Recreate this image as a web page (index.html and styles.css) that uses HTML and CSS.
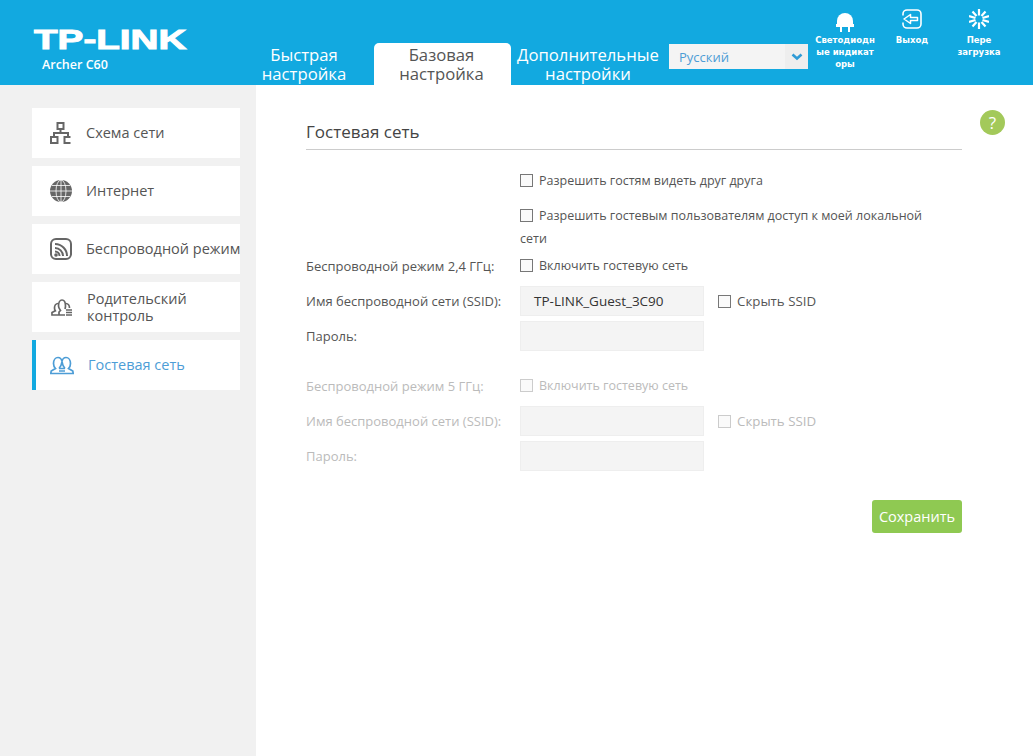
FILE: index.html
```html
<!DOCTYPE html>
<html lang="ru">
<head>
    <meta charset="UTF-8">
    <title>TP-LINK Archer C60</title>
    <link rel="stylesheet" href="styles.css">
</head>
<body>
    <!-- Top bar -->
    <header class="topbar">
        <div class="brand">
            <div class="brand-logo">TP-LINK</div>
            <div class="brand-model">Archer C60</div>
        </div>
        <nav class="tabs">
            <div class="tab tab-quick">Быстрая настройка</div>
            <div class="tab tab-basic active">Базовая настройка</div>
            <div class="tab tab-advanced">Дополнительные настройки</div>
        </nav>
        <div class="lang-select">
            <span class="lang-value">Русский</span>
            <span class="lang-arrow">
                <svg width="12" height="8" viewBox="0 0 12 8"><path d="M1.500 1.500L6 5.500l4.500-4" fill="none" stroke="#2f9bd6" stroke-width="2.600"/></svg>
            </span>
        </div>
        <div class="top-actions">
            <div class="action action-led">
                <svg width="18" height="19" viewBox="0 0 18 19"><path d="M1 13V8a8 8 0 0 1 16 0v5z" fill="#fff"/><rect x="0" y="11" width="18" height="3" fill="#fff"/><rect x="4" y="14" width="2" height="5" fill="#fff"/><rect x="12" y="14" width="2" height="5" fill="#fff"/></svg>
                <span>Светодиодн ые индикат оры</span>
            </div>
            <div class="action action-exit">
                <svg width="20" height="20" viewBox="0 0 20 20" fill="none" stroke="#fff"><path d="M1 6.500V5a4 4 0 0 1 4-4h10a4 4 0 0 1 4 4v10a4 4 0 0 1-4 4H5a4 4 0 0 1-4-4v-1.500" stroke-width="1.600"/><path d="M2 10l6.500-4.500v3h7v3h-7v3z" stroke-width="1.500" stroke-linejoin="round"/></svg>
                <span>Выход</span>
            </div>
            <div class="action action-reboot">
                <svg width="20" height="20" viewBox="0 0 20 20" stroke="#fff" stroke-width="2.200"><path d="M10 0v6.500M10 13.500V20M0 7l6.500 2M13.500 11L20 13M0 13l6.500-2M13.500 9L20 7M3.500 2.500L7.500 7M12.500 13l4 4.500M3.500 17.500l4-4.500M12.500 7l4-4.500"/></svg>
                <span>Пере загрузка</span>
            </div>
        </div>
    </header>

    <div class="page">
        <!-- Left menu -->
        <aside class="sidebar">
            <div class="menu-item">
                <svg class="menu-icon" width="24" height="24" viewBox="0 0 24 24" fill="none" stroke="#666" stroke-width="2"><rect x="8.500" y="2" width="6" height="6"/><rect x="2" y="16" width="6.500" height="6"/><path d="M21.500 16h-6v6h6M11.500 8v4M5 16v-4h14v4"/></svg>
                <span>Схема сети</span>
            </div>
            <div class="menu-item">
                <svg class="menu-icon" width="24" height="24" viewBox="0 0 24 24"><circle cx="12" cy="12" r="11" fill="#666"/><g fill="none" stroke="#fff" stroke-width=".8"><ellipse cx="12" cy="12" rx="5" ry="11"/><path d="M12 1v22M1 12h22M3 6.500h18M3 17.500h18"/></g></svg>
                <span>Интернет</span>
            </div>
            <div class="menu-item">
                <svg class="menu-icon" width="24" height="24" viewBox="0 0 24 24" fill="none" stroke="#666"><rect x="2" y="2" width="20" height="20" rx="5" stroke-width="2"/><path d="M6 11a8 8 0 0 1 8 8M6 14.500a4.500 4.500 0 0 1 4.500 4.500M6 7a12 12 0 0 1 12 12" stroke-width="2"/><circle cx="7" cy="18" r="1.800" fill="#666" stroke="none"/></svg>
                <span>Беспроводной режим</span>
            </div>
            <div class="menu-item">
                <svg class="menu-icon icon-parent" width="22" height="18" viewBox="0 0 22 18" fill="none" stroke="#666" stroke-width="1.700"><path d="M7 5.500C5 5.500 3.500 7.500 3.500 10c0 1 .3 2 .8 2.800L1 14.500V17h13"/><path d="M8 17v-3l1.500-1.500C8.300 11 7.500 9.500 7.500 8c0-3.500 1.500-6 3.500-6s3.500 2.500 3.500 6c0 1-.2 2-.5 3"/><path d="M15 5.500c2 0 3.500 2 3.500 4.500"/><path d="M15 12h6M15 14.500h6M15 17h6" stroke-width="1.600"/></svg>
                <span>Родительский контроль</span>
            </div>
            <div class="menu-item active">
                <svg class="menu-icon" width="24" height="24" viewBox="0 0 24 24" fill="none" stroke="#4d9dd6" stroke-width="1.700"><path d="M9 20.500H.8l.4-2.500 4.300-2.500C4 14 3.500 12.500 3.500 10.500 3.500 7 5.500 4.500 8 4.500s3.500 1.500 4 4c.5-2.500 1.500-4 4-4s4.500 2.500 4.500 6c0 2-.5 3.500-2 5l4.300 2.500.4 2.500H15"/><path d="M9 15.500c1-1 2.500-3 3-7 .5 4 2 6 3 7"/><path d="M9 15.500h6M9 18h6M9 20.500h6"/></svg>
                <span>Гостевая сеть</span>
            </div>
        </aside>

        <!-- Content -->
        <main class="content">
            <div class="help">?</div>
            <h2 class="section-title">Гостевая сеть</h2>

            <div class="form">
                <div class="form-row row-top">
                    <label class="check"><i class="box"></i>Разрешить гостям видеть друг друга</label>
                </div>
                <div class="form-row row-wrap">
                    <label class="check"><i class="box"></i>Разрешить гостевым пользователям доступ к моей локальной сети</label>
                </div>
                <div class="form-row row-check">
                    <div class="label">Беспроводной режим 2,4 ГГц:</div>
                    <label class="check"><i class="box"></i>Включить гостевую сеть</label>
                </div>
                <div class="form-row row-ssid">
                    <div class="label">Имя беспроводной сети (SSID):</div>
                    <div class="input">TP-LINK_Guest_3C90</div>
                    <label class="check hide-ssid"><i class="box"></i>Скрыть SSID</label>
                </div>
                <div class="form-row row-pass">
                    <div class="label">Пароль:</div>
                    <div class="input"></div>
                </div>

                <div class="form-row row-check band-5 disabled">
                    <div class="label">Беспроводной режим 5 ГГц:</div>
                    <label class="check"><i class="box"></i>Включить гостевую сеть</label>
                </div>
                <div class="form-row row-ssid disabled">
                    <div class="label">Имя беспроводной сети (SSID):</div>
                    <div class="input"></div>
                    <label class="check hide-ssid"><i class="box"></i>Скрыть SSID</label>
                </div>
                <div class="form-row row-pass disabled">
                    <div class="label">Пароль:</div>
                    <div class="input"></div>
                </div>
            </div>

            <div class="actions">
                <button class="save">Сохранить</button>
            </div>
        </main>
    </div>
</body>
</html>
```

FILE: styles.css
```css
* {
    margin: 0;
    padding: 0;
    box-sizing: border-box;
}

body {
    font-family: 'Open Sans', 'DejaVu Sans', sans-serif;
    font-size: 13px;
    color: #555;
    background: #fff;
    overflow: hidden;
}

/* Top bar */
.topbar {
    height: 85px;
    background: #12a9e0;
    display: flex;
    align-items: flex-end;
    padding-left: 34px;
    color: #fff;
}

.brand {
    width: 202px;
    align-self: flex-start;
    padding-top: 25px;
}

.brand-logo {
    font-family: 'Liberation Sans', sans-serif;
    font-size: 28px;
    font-weight: bold;
    line-height: 30px;
    -webkit-text-stroke: 1px #fff;
    transform: scaleX(1.38);
    transform-origin: left center;
}

.brand-model {
    font-size: 12.500px;
    font-weight: 600;
    margin: 1px 0 0 8px;
}

.tabs {
    display: flex;
    height: 42px;
}

.tab {
    font-size: 16.700px;
    line-height: 19px;
    text-align: center;
    padding-top: 2px;
    color: #fff;
}

.tab-quick {
    width: 138px;
    padding-left: 22px;
    padding-right: 24px;
}

.tab-basic {
    width: 137px;
    padding-left: 20px;
    padding-right: 22px;
}

.tab-advanced {
    width: 158px;
    padding-right: 4px;
}

.tab.active {
    background: #fff;
    color: #555;
    border-radius: 5px 5px 0 0;
}

.lang-select {
    width: 139px;
    height: 25px;
    align-self: flex-start;
    margin: 44px 0 0 0;
    background: #f4f4f4;
    display: flex;
    align-items: center;
    justify-content: space-between;
    color: #4d9dd6;
    font-size: 13px;
    padding-left: 10px;
}

.lang-arrow {
    width: 23px;
    height: 100%;
    background: #eee;
    display: flex;
    align-items: center;
    justify-content: center;
}

.top-actions {
    display: flex;
    align-self: flex-start;
    padding-top: 9px;
}

.action {
    font-family: 'DejaVu Sans', sans-serif;
    font-size: 8.500px;
    font-weight: bold;
    line-height: 12px;
    text-align: center;
    display: flex;
    flex-direction: column;
    align-items: center;
    overflow-wrap: break-word;
}

.action svg {
    margin-bottom: 5px;
}

.action-led {
    width: 62px;
    margin-left: 6px;
}

.action-led svg {
    margin-top: 4px;
    margin-bottom: 2px;
}

.action-exit {
    width: 44px;
    margin-left: 14px;
}

.action-reboot {
    width: 50px;
    margin-left: 20px;
}

/* Page */
.page {
    display: flex;
    height: 671px;
}

.sidebar {
    width: 256px;
    background: #f1f1f1;
    padding: 23px 16px 0 32px;
    display: flex;
    flex-direction: column;
    gap: 8px;
}

.menu-item {
    height: 50px;
    background: #fff;
    display: flex;
    align-items: center;
    padding-left: 17px;
    font-size: 14.500px;
    line-height: 17px;
    color: #555;
    white-space: nowrap;
    overflow: hidden;
}

.menu-item span {
    margin-bottom: 2px;
}

.menu-item .menu-icon {
    flex: none;
    margin-right: 13px;
}

.menu-item:nth-child(4) {
    white-space: normal;
    padding-left: 19px;
}

.menu-item:nth-child(4) span {
    margin-bottom: 0;
}

.menu-item:nth-child(4) .menu-icon {
    margin-right: 14px;
}

.menu-item.active {
    border-left: 4px solid #12a9e0;
    padding-left: 14px;
    color: #4d9dd6;
}

.menu-item.active .menu-icon {
    margin-right: 14px;
}

.content {
    position: relative;
    flex: 1;
    padding: 36px 71px 0 50px;
}

.help {
    position: absolute;
    left: 724px;
    top: 25px;
    width: 25px;
    height: 25px;
    border-radius: 50%;
    background: #a3c95a;
    color: #fff;
    font-size: 17px;
    line-height: 25px;
    text-align: center;
}

.section-title {
    font-size: 17px;
    font-weight: normal;
    line-height: 22px;
    padding-bottom: 6px;
    border-bottom: 1px solid #ccc;
    color: #444;
}

.form-row {
    display: grid;
    grid-template-columns: 214px 184px auto;
    align-items: center;
}

.form-row .check {
    grid-column: 2 / 4;
}

.form-row .hide-ssid {
    grid-column: 3;
    margin-left: 14px;
    font-size: 13.300px;
}

.row-top {
    margin-top: 20px;
    height: 20px;
}

.row-top .check,
.row-check .check {
    margin-top: 1px;
}

.row-wrap {
    margin-top: 14px;
    height: 23px;
    align-items: start;
}

.row-wrap .check {
    line-height: 23px;
    width: 420px;
}

.row-check {
    margin-top: 28px;
    height: 20px;
}

.row-ssid {
    margin-top: 11px;
    height: 30px;
}

.row-pass {
    margin-top: 5px;
    height: 30px;
}

.band-5 {
    margin-top: 24px;
}

.check {
    display: block;
    font-size: 12.500px;
    line-height: 20px;
}

.box {
    display: inline-block;
    width: 13px;
    height: 13px;
    border: 1px solid #777;
    background: #fafafa;
    margin-right: 6px;
    vertical-align: -2px;
}

.input {
    height: 30px;
    background: #f4f4f4;
    border: 1px solid #eee;
    color: #333;
    font-size: 13.500px;
    line-height: 28px;
    padding-left: 13px;
}

.disabled {
    color: #bbb;
}

.disabled .box {
    border-color: #ccc;
}

.actions {
    display: flex;
    justify-content: flex-end;
    margin-top: 29px;
}

.save {
    width: 90px;
    height: 33px;
    background: #8fc952;
    color: #fff;
    border: none;
    border-radius: 3px;
    font-family: inherit;
    font-size: 14.500px;
}
```
